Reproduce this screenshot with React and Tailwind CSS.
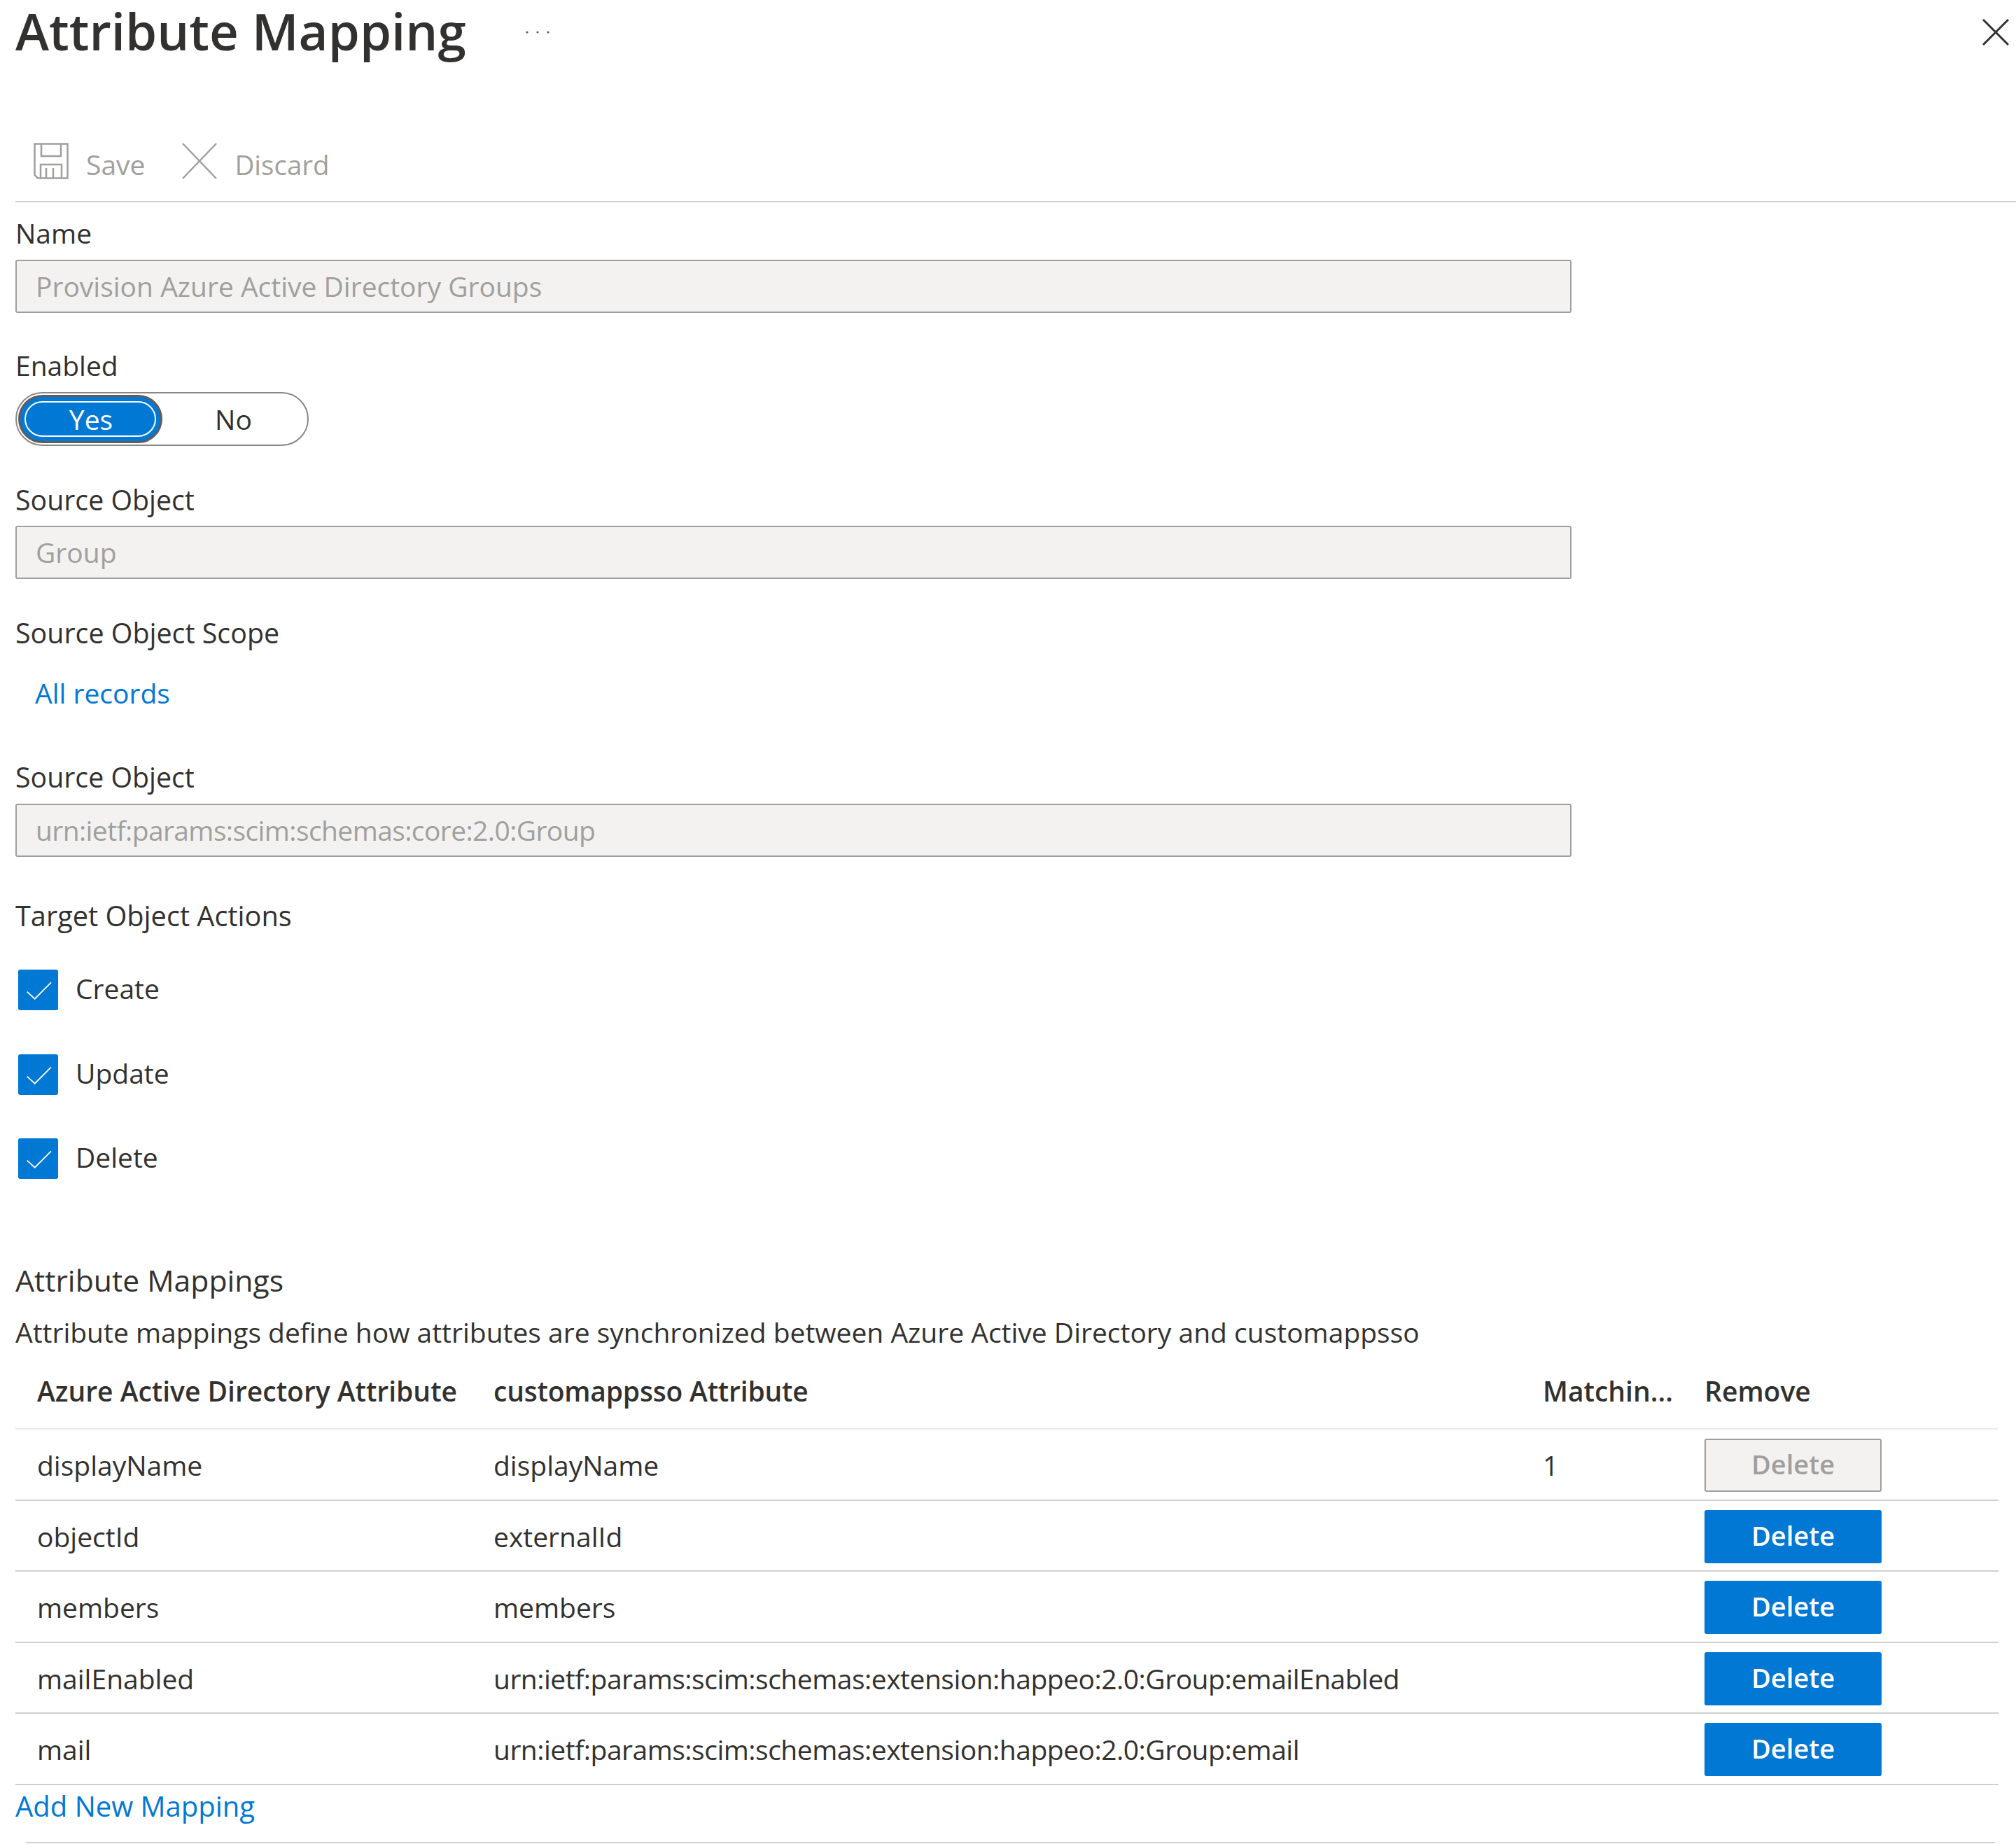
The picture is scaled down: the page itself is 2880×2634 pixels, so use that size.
const font = "font-['Open_Sans',sans-serif]";

function Label({ children, className = "", size = "text-[39px]" }) {
  return <div className={`h-[34px] leading-[32px] ${size} text-[#323130] whitespace-nowrap ${className}`}>{children}</div>;
}

function DisabledInput({ value, className = "", tracking = "" }) {
  return (
    <div className={`w-[2223px] h-[76px] bg-[#f3f2f1] border-2 border-[#a19f9d] rounded-[3px] flex items-center pl-[27px] text-[39px] text-[#a19f9d] whitespace-nowrap ${tracking} ${className}`}>
      {value}
    </div>
  );
}

function Check({ label, className = "" }) {
  return (
    <div className={`flex items-center h-[58px] ml-[4px] ${className}`}>
      <div className="w-[57px] h-[58px] bg-[#0078d4] rounded-[3px]">
        <svg width="57" height="58" viewBox="0 0 57 58" fill="none">
          <path d="M12.7 31.7 L23.7 41.7 L47 18.3" stroke="#ffffff" strokeWidth="1.8" />
        </svg>
      </div>
      <span className="ml-[25px] mb-[4px] text-[39px] leading-[54px] text-[#323130]">{label}</span>
    </div>
  );
}

function Row({ a, b, m, disabled, tracking = "" }) {
  return (
    <div className="grid grid-cols-[683px_1499px_231px_1fr] h-[101.5px] items-center border-b-2 border-[#d2d0ce] text-[39px] leading-[54px] text-[#323130] whitespace-nowrap">
      <div className="pl-[31px] pt-[3px]">{a}</div>
      <div className={`pt-[3px] ${tracking}`}>{b}</div>
      <div className="pt-[3px]">{m}</div>
      <div className="pt-[3px]">
        {disabled ? (
          <div className="w-[253px] h-[76px] pb-[4px] bg-[#f3f2f1] border-2 border-[#a19f9d] rounded-[3px] flex items-center justify-center text-[38px] text-[#a19f9d] font-semibold">Delete</div>
        ) : (
          <div className="w-[253px] h-[76px] pb-[4px] bg-[#0078d4] rounded-[3px] flex items-center justify-center text-[38px] text-white font-semibold">Delete</div>
        )}
      </div>
    </div>
  );
}

export default function App() {
  return (
    <div className={`w-[2880px] h-[2634px] bg-white overflow-hidden pl-[22px] ${font}`}>
      <div className="h-[92px] flex items-center pr-[10px]">
        <h1 className="mb-[4px] text-[72.6px] leading-[88px] font-semibold text-[#323130] whitespace-nowrap">Attribute Mapping</h1>
        <svg className="ml-[84px]" width="36" height="6" viewBox="0 0 36 6" fill="#605e5c">
          <circle cx="3" cy="3" r="1.6" />
          <circle cx="18" cy="3" r="1.6" />
          <circle cx="33" cy="3" r="1.6" />
        </svg>
        <svg className="ml-auto" width="38" height="38" viewBox="0 0 38 38" fill="none" stroke="#323130" strokeWidth="3">
          <path d="M1 1 L37 37 M37 1 L1 37" />
        </svg>
      </div>

      <div className="h-[197px] border-b-2 border-[#d2d0ce] flex items-start pt-[112px] pl-[26px] text-[#a19f9d] text-[39px]">
        <svg width="50" height="52" viewBox="0 0 50 52" fill="none" stroke="#a19f9d" strokeWidth="2.5">
          <path d="M1.5 1.5 H48.5 V50.5 H6 L1.5 46 Z" />
          <path d="M11 1.5 V19 H39 V1.5" />
          <path d="M10 50.5 V31 H40 V50.5" />
          <path d="M18 36 V50 M28 36 V50" />
        </svg>
        <span className="ml-[25px] leading-[62px]">Save</span>
        <svg className="ml-[53px]" width="50" height="52" viewBox="0 0 50 52" fill="none" stroke="#a19f9d" strokeWidth="2.5">
          <path d="M1 1 L49 51 M49 1 L1 51" />
        </svg>
        <span className="ml-[25px] text-[38.5px] leading-[62px]">Discard</span>
      </div>

      <Label className="mt-[28px]">Name</Label>
      <DisabledInput className="mt-[20px]" value="Provision Azure Active Directory Groups" />

      <Label className="mt-[59px]">Enabled</Label>
      <div className="mt-[20px] w-[419px] h-[77px] rounded-full border-2 border-[#8a8886] flex items-center text-[39px] text-[#323130]">
        <div className="ml-[2px] w-[206px] h-[69px] rounded-full border-[3px] border-[#605e5c] bg-[#0078d4] flex items-center justify-center p-[6px]">
          <div className="w-full h-full pt-[2px] pl-[2px] rounded-full border-2 border-white flex items-center justify-center text-white">Yes</div>
        </div>
        <div className="flex-1 text-center pr-[4px] pt-[2px]">No</div>
      </div>

      <Label className="mt-[61px]" size="text-[39.3px]">Source Object</Label>
      <DisabledInput className="mt-[19px]" value="Group" />

      <Label className="mt-[61px]" size="text-[39.4px]">Source Object Scope</Label>
      <div className="mt-[51px] ml-[28px] h-[34px] leading-[34px] text-[39px] text-[#0078d4]">All records</div>

      <Label className="mt-[87px]" size="text-[39.3px]">Source Object</Label>
      <DisabledInput className="mt-[20px]" tracking="tracking-[-0.6px]" value="urn:ietf:params:scim:schemas:core:2.0:Group" />

      <Label className="mt-[68px]" size="text-[39.7px]">Target Object Actions</Label>
      <Check className="mt-[59px]" label="Create" />
      <Check className="mt-[63px]" label="Update" />
      <Check className="mt-[62px]" label="Delete" />

      <Label className="mt-[129px]" size="text-[42.7px]">Attribute Mappings</Label>
      <Label className="mt-[40px]">Attribute mappings define how attributes are synchronized between Azure Active Directory and customappsso</Label>

      <div className="w-[2833px]">
        <div className="grid grid-cols-[683px_1499px_231px_1fr] h-[121px] items-start pt-[39px] border-b-2 border-[#edebe9] text-[39px] leading-[54px] font-semibold text-[#323130] whitespace-nowrap">
          <div className="pl-[31px]">Azure Active Directory Attribute</div>
          <div className="tracking-[-0.2px]">customappsso Attribute</div>
          <div>Matchin...</div>
          <div>Remove</div>
        </div>
        <Row a="displayName" b="displayName" m="1" disabled />
        <Row a="objectId" b="externalId" />
        <Row a="members" b="members" />
        <Row a="mailEnabled" b="urn:ietf:params:scim:schemas:extension:happeo:2.0:Group:emailEnabled" tracking="tracking-[-0.5px]" />
        <Row a="mail" b="urn:ietf:params:scim:schemas:extension:happeo:2.0:Group:email" tracking="tracking-[-0.5px]" />
      </div>

      <div className="mt-[14px] h-[34px] leading-[31px] text-[40px] text-[#0078d4]">Add New Mapping</div>
      <div className="mt-[33px] ml-[15px] w-[2813px] border-b-2 border-[#d2d0ce]" />
    </div>
  );
}
